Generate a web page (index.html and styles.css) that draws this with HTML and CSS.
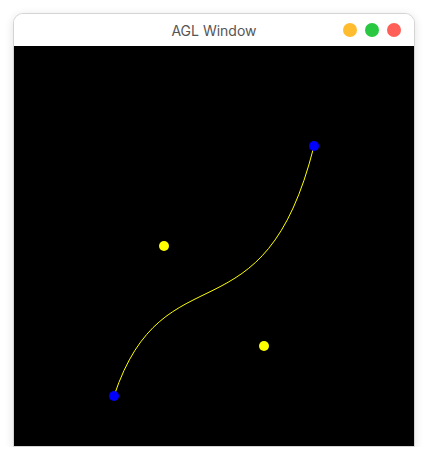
FILE: index.html
```html
<!DOCTYPE html>
<html>
<head>
<meta charset="utf-8">
<link rel="stylesheet" href="styles.css">
</head>
<body>
<div class="window">
  <div class="titlebar">
    <span class="title">AGL Window</span>
    <div class="buttons">
      <span class="btn btn-min"></span>
      <span class="btn btn-max"></span>
      <span class="btn btn-close"></span>
    </div>
  </div>
  <div class="canvas">
    <svg width="400" height="400" viewBox="0 0 400 400">
      <rect width="400" height="400" fill="#000"/>
      <path d="M100 350 C150 200 250 300 300 100" fill="none" stroke="#ffff00" stroke-width="1"/>
      <circle cx="150" cy="200" r="5" fill="#ffff00"/>
      <circle cx="250" cy="300" r="5" fill="#ffff00"/>
      <circle cx="100" cy="350" r="5" fill="#0000ff"/>
      <circle cx="300" cy="100" r="5" fill="#0000ff"/>
    </svg>
  </div>
</div>
</body>
</html>
```
FILE: styles.css
```css
html, body {
  margin: 0;
  padding: 0;
  background: #ffffff;
}
body {
  padding: 13px 0 0 13px;
}
.window {
  width: 400px;
  border: 1px solid #d4d4d4;
  border-radius: 10px 10px 0 0;
  overflow: hidden;
  background: #ffffff;
  box-shadow: 0 2px 10px rgba(0, 0, 0, 0.12);
}
.titlebar {
  height: 32px;
  position: relative;
  display: flex;
  align-items: center;
  justify-content: center;
  background: #ffffff;
}
.title {
  font-family: "Inter", "Liberation Sans", sans-serif;
  font-size: 14px;
  color: #555555;
  padding-top: 0;
}
.buttons {
  position: absolute;
  right: 13px;
  top: 9px;
  display: flex;
  gap: 8px;
}
.btn {
  width: 14px;
  height: 14px;
  border-radius: 50%;
  display: block;
}
.btn-min { background: #febc2e; border: 0; }
.btn-max { background: #28c840; }
.btn-close { background: #ff5f57; }
.canvas {
  display: block;
  height: 400px;
  line-height: 0;
}
.canvas svg { display: block; }
```
